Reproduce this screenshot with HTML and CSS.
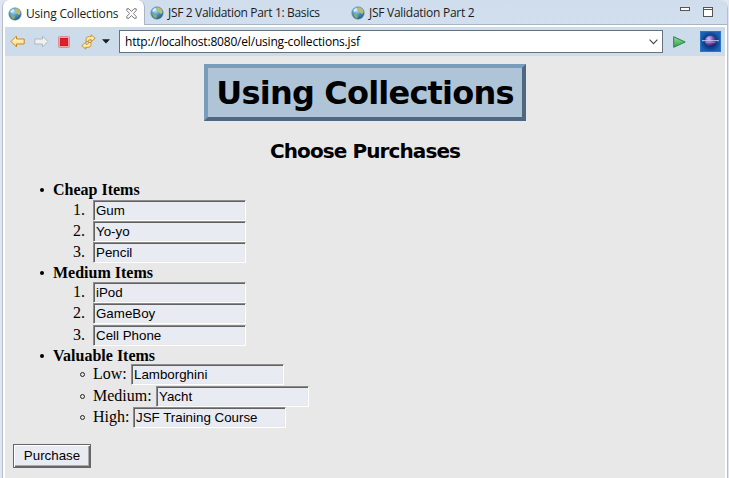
FILE: index.html
```html
<!DOCTYPE html>
<html lang="en">
<head>
<meta charset="utf-8">
<title>Using Collections</title>
<link rel="stylesheet" href="styles.css">
</head>
<body>
<svg class="defs" width="0" height="0" aria-hidden="true">
  <defs>
    <radialGradient id="sea" cx="38%" cy="30%" r="75%">
      <stop offset="0" stop-color="#b5dff5"/><stop offset=".5" stop-color="#4c94c5"/><stop offset="1" stop-color="#245583"/>
    </radialGradient>
    <linearGradient id="gold" x1="0" y1="0" x2="0" y2="1">
      <stop offset="0" stop-color="#fffbe0"/><stop offset="1" stop-color="#fbd873"/>
    </linearGradient>
    <linearGradient id="green" x1="0" y1="0" x2="0" y2="1">
      <stop offset="0" stop-color="#9ad79b"/><stop offset="1" stop-color="#2fa04b"/>
    </linearGradient>
    <radialGradient id="navy"><stop offset="0" stop-color="#08265f"/><stop offset=".6" stop-color="#0d3e88"/><stop offset="1" stop-color="#1c61b5"/></radialGradient>
    <radialGradient id="orb" cx="35%" cy="30%" r="75%"><stop offset="0" stop-color="#d5c0f0"/><stop offset=".5" stop-color="#7755b4"/><stop offset="1" stop-color="#24145f"/></radialGradient>
    <symbol id="globe" viewBox="0 0 14 14">
      <circle cx="7" cy="7" r="6.2" fill="url(#sea)" stroke="#5f8ba5" stroke-width=".6"/>
      <path d="M6.2 2.1 8.5 1.3 11.5 3 12.7 6.2 11 8.2 9.7 6.7 7.8 6.2 7 4.2Z" fill="#b9bd72"/>
      <path d="M2.2 7.5 5 8 7.2 9.6 6.2 12.5 3.8 11.2Z" fill="#87ad69"/>
      <path d="M2.3 4.5Q3.5 2 6 2L5.6 4.2 3.5 6Z" fill="#d8f0fa"/>
    </symbol>
  </defs>
</svg>
<div class="window">
  <header class="tabs">
    <div class="tab active"><svg class="globe"><use href="#globe"/></svg><span class="t1">Using Collections</span>
      <svg class="close" width="11" height="11" viewBox="0 0 11 11"><path d="M.8.8H3L5.5 3.5 8 .8h2.2v1.7L7.4 5.5l2.8 3v1.7H8L5.5 7.5 3 10.200H.8V8.500l2.800-3L.8 2.500Z" fill="#fff" stroke="#6b6b6b" stroke-width=".9"/></svg>
    </div>
    <div class="tab second"><svg class="globe"><use href="#globe"/></svg><span class="t2">JSF 2 Validation Part 1: Basics</span></div>
    <div class="tab third"><svg class="globe"><use href="#globe"/></svg><span class="t3">JSF Validation Part 2</span></div>
    <div class="controls">
      <i class="min"></i><i class="max"></i>
    </div>
  </header>
  <nav class="toolbar">
    <svg class="back" width="15" height="13" viewBox="0 0 15 13"><path d="M1 6.500 6.500 1v3h7.700v5H6.500v3Z" fill="url(#gold)" stroke="#c48a25"/></svg>
    <svg class="forward" width="15" height="13" viewBox="0 0 15 13"><path d="M14 6.500 8.500 1v3H.8v5h7.700v3Z" fill="#eef0f3" stroke="#b3b7bd"/></svg>
    <svg class="stop" width="12" height="12" viewBox="0 0 12 12"><rect x=".5" y=".5" width="11" height="11" rx="1" fill="#f6a9ad" stroke="#d98e98"/><rect x="2.500" y="2.500" width="7" height="7" fill="#df1f2b" stroke="#c91b2a"/></svg>
    <svg class="refresh" width="15" height="16" viewBox="0 0 15 16"><g fill="url(#gold)" stroke="#c48a25" stroke-width=".9" stroke-linejoin="round"><path d="M5 7.500V4.800Q5.500 2.300 8.500 2.600h1.700V.8l4 3.500-4 3.500V5.800H8.500Q7.300 5.800 7.500 7.500Z"/><path d="M10 8.500v2.700Q9.500 13.700 6.500 13.400H4.800v1.800l-4-3.500 4-3.500v2h1.700Q7.700 10.200 7.500 8.500Z"/></g></svg>
    <svg class="caret" width="8" height="5" viewBox="0 0 8 5"><path d="M0 .3h8L4 4.500Z" fill="#1b1b1b"/></svg>
    <div class="address"><span class="url">http://localhost:8080/el/using-collections.jsf</span>
      <svg width="9" height="6" viewBox="0 0 9 6"><path d="M.6.700 4.500 4.600 8.400.700" fill="none" stroke="#444" stroke-width="1.100"/></svg></div>
    <svg class="go" width="13" height="12" viewBox="0 0 13 12"><path d="M.7.700 12.200 6 .7 11.300Z" fill="url(#green)" stroke="#298444"/></svg>
    <svg class="brand" width="21" height="21" viewBox="0 0 21 21"><rect width="21" height="21" fill="url(#navy)"/><rect x=".5" y=".5" width="20" height="20" fill="none" stroke="#2c75c4"/><circle cx="10.500" cy="10" r="5.500" fill="url(#orb)"/><path d="M2 9.700h17" stroke="#c7cdf0"/><path d="M5.500 11.700h10" stroke="#b59ade" stroke-width=".7"/></svg>
  </nav>
  <main class="page">
    <h1>Using Collections</h1>
    <h2>Choose Purchases</h2>
    <form>
      <section><h3 class="first">Cheap Items</h3>
        <div class="row"><span class="num">1.</span><input value="Gum"></div>
        <div class="row"><span class="num">2.</span><input value="Yo-yo"></div>
        <div class="row"><span class="num">3.</span><input value="Pencil"></div>
      </section>
      <section><h3>Medium Items</h3>
        <div class="row"><span class="num">1.</span><input value="iPod"></div>
        <div class="row"><span class="num">2.</span><input value="GameBoy"></div>
        <div class="row spaced"><span class="num">3.</span><input value="Cell Phone"></div>
      </section>
      <section><h3 class="short">Valuable Items</h3>
        <div class="row"><i class="ring"></i><label class="low">Low:</label><input value="Lamborghini"></div>
        <div class="row spaced"><i class="ring"></i><label class="medium">Medium:</label><input value="Yacht"></div>
        <div class="row"><i class="ring"></i><label class="high">High:</label><input value="JSF Training Course"></div>
      </section>
      <button type="button">Purchase</button>
    </form>
  </main>
</div>
</body>
</html>
```
FILE: styles.css
```css
* { box-sizing: border-box; }
body { margin: 0; background: #dfe6f1; overflow: hidden; }
svg { display: block; flex: none; }
.defs { position: absolute; }
.window {
  width: 726px; height: 490px; margin-left: 2px;
  border: 1px solid #b6bdcb; border-top: 0; border-radius: 7px 9px 0 0;
  background: #fff; overflow: hidden;
}
.tabs {
  height: 25px; display: flex;
  background: linear-gradient(#cfddec, #d1dfee);
  font: 12px "Open Sans", "Noto Sans", sans-serif; color: #1c1c1c;
}
.tab { display: flex; align-items: center; height: 25px; padding-top: 2px; border-bottom: 1px solid #aab5c4; white-space: nowrap; flex: none; }
.tab span { line-height: 16px; }
.globe { width: 14px; height: 14px; margin-right: 4px; }
.active { width: 142px; padding: 2px 0 0 5px; background: #fff; border-bottom: 0; border-right: 1px solid #aab5c4; border-radius: 6px 7px 0 0; }
.t1 { width: 94px; letter-spacing: -.18px; }
.t2 { letter-spacing: -.33px; }
.t3 { letter-spacing: -.27px; }
.close { margin-left: 6px; }
.second { width: 202px; padding-left: 5px; }
.third { width: 150px; padding-left: 4px; }
.controls { flex: 1; display: flex; border-bottom: 1px solid #aab5c4; justify-content: flex-end; padding: 7px 14px 0 0; }
.min { width: 10px; height: 4px; border: 1px solid #555; background: #fff; margin-right: 13px; }
.max { width: 10px; height: 10px; border: 1px solid #555; background: linear-gradient(#fff 1px, #555 1px, #555 2px, #fff 2px); }
.toolbar {
  height: 29px; margin: 2px 2px 0; padding-left: 5px;
  display: flex; align-items: center; background: #cddceb;
}
.forward { margin-left: 9px; }
.stop { margin-left: 9px; }
.refresh { margin-left: 11px; }
.caret { margin-left: 6px; }
.address {
  width: 544px; height: 23px; margin-left: 9px; padding: 0 4px 0 5px;
  display: flex; align-items: center; justify-content: space-between;
  background: #fff; border: 1px solid #68727e;
  font: 12px "Open Sans", "Noto Sans", sans-serif; color: #000;
}
.url { letter-spacing: -.19px; line-height: 16px; }
.go { margin-left: 10px; }
.brand { margin-left: 14px; }
.page { height: 430px; margin: 0 2px; padding: 8px; background: #e8e8e8; font: 16px/18px "Liberation Serif", serif; color: #000; }
h1 {
  width: 322px; height: 57px; margin: 0 0 0 191px;
  border: 4px solid; border-color: #789cbb #50687f #50687f #789cbb;
  background: #b0c4d8; font: bold 32px/51px "DejaVu Sans", sans-serif;
  text-align: center; letter-spacing: -.8px; white-space: nowrap;
}
h2 { margin: 18px 0 0; text-align: center; font: bold 20px/24px "DejaVu Sans", sans-serif; letter-spacing: -.9px; }
form { margin-top: 17px; }
section { padding-left: 40px; }
h3 { display: flex; align-items: center; height: 19px; margin: 0; font: bold 16px/19px "Liberation Serif", serif; }
h3::before { content: ""; width: 4px; height: 4px; border-radius: 50%; background: #000; margin: 1px 9px 0 -13px; }
.first { margin-bottom: 1px; }
.short { height: 18px; }
.row { display: flex; height: 21px; padding-left: 20px; line-height: 17px; }
.spaced { margin-top: 1px; }
.num { width: 20px; padding-top: 1px; }
.ring { width: 5px; height: 5px; margin: 8px 8px 0 7px; border: 1px solid #222; border-radius: 50%; }
.low { width: 38px; } .medium { width: 63px; } .high { width: 40px; }
.row label { padding-top: 1px; }
input {
  width: 153px; height: 21px; padding: 0 2px; border-radius: 0;
  border: 1px solid; border-color: #8c8c8c #fff #fff #8c8c8c;
  box-shadow: inset 1px 1px #626262, inset -1px -1px #e8e8e8;
  background: #e9ebf2; font: 13.333px "Liberation Sans", sans-serif; color: #000; outline: 0;
}
button {
  display: block; width: 78px; height: 24px; margin: 16px 0 0; padding: 0;
  border: 1px solid #666; border-radius: 0; background: #e9ebf2;
  box-shadow: inset 1px 1px #fff, inset -1px -1px #666, inset -2px -2px #aaa;
  font: 13.333px/18px "Liberation Sans", sans-serif; color: #000;
}
```
